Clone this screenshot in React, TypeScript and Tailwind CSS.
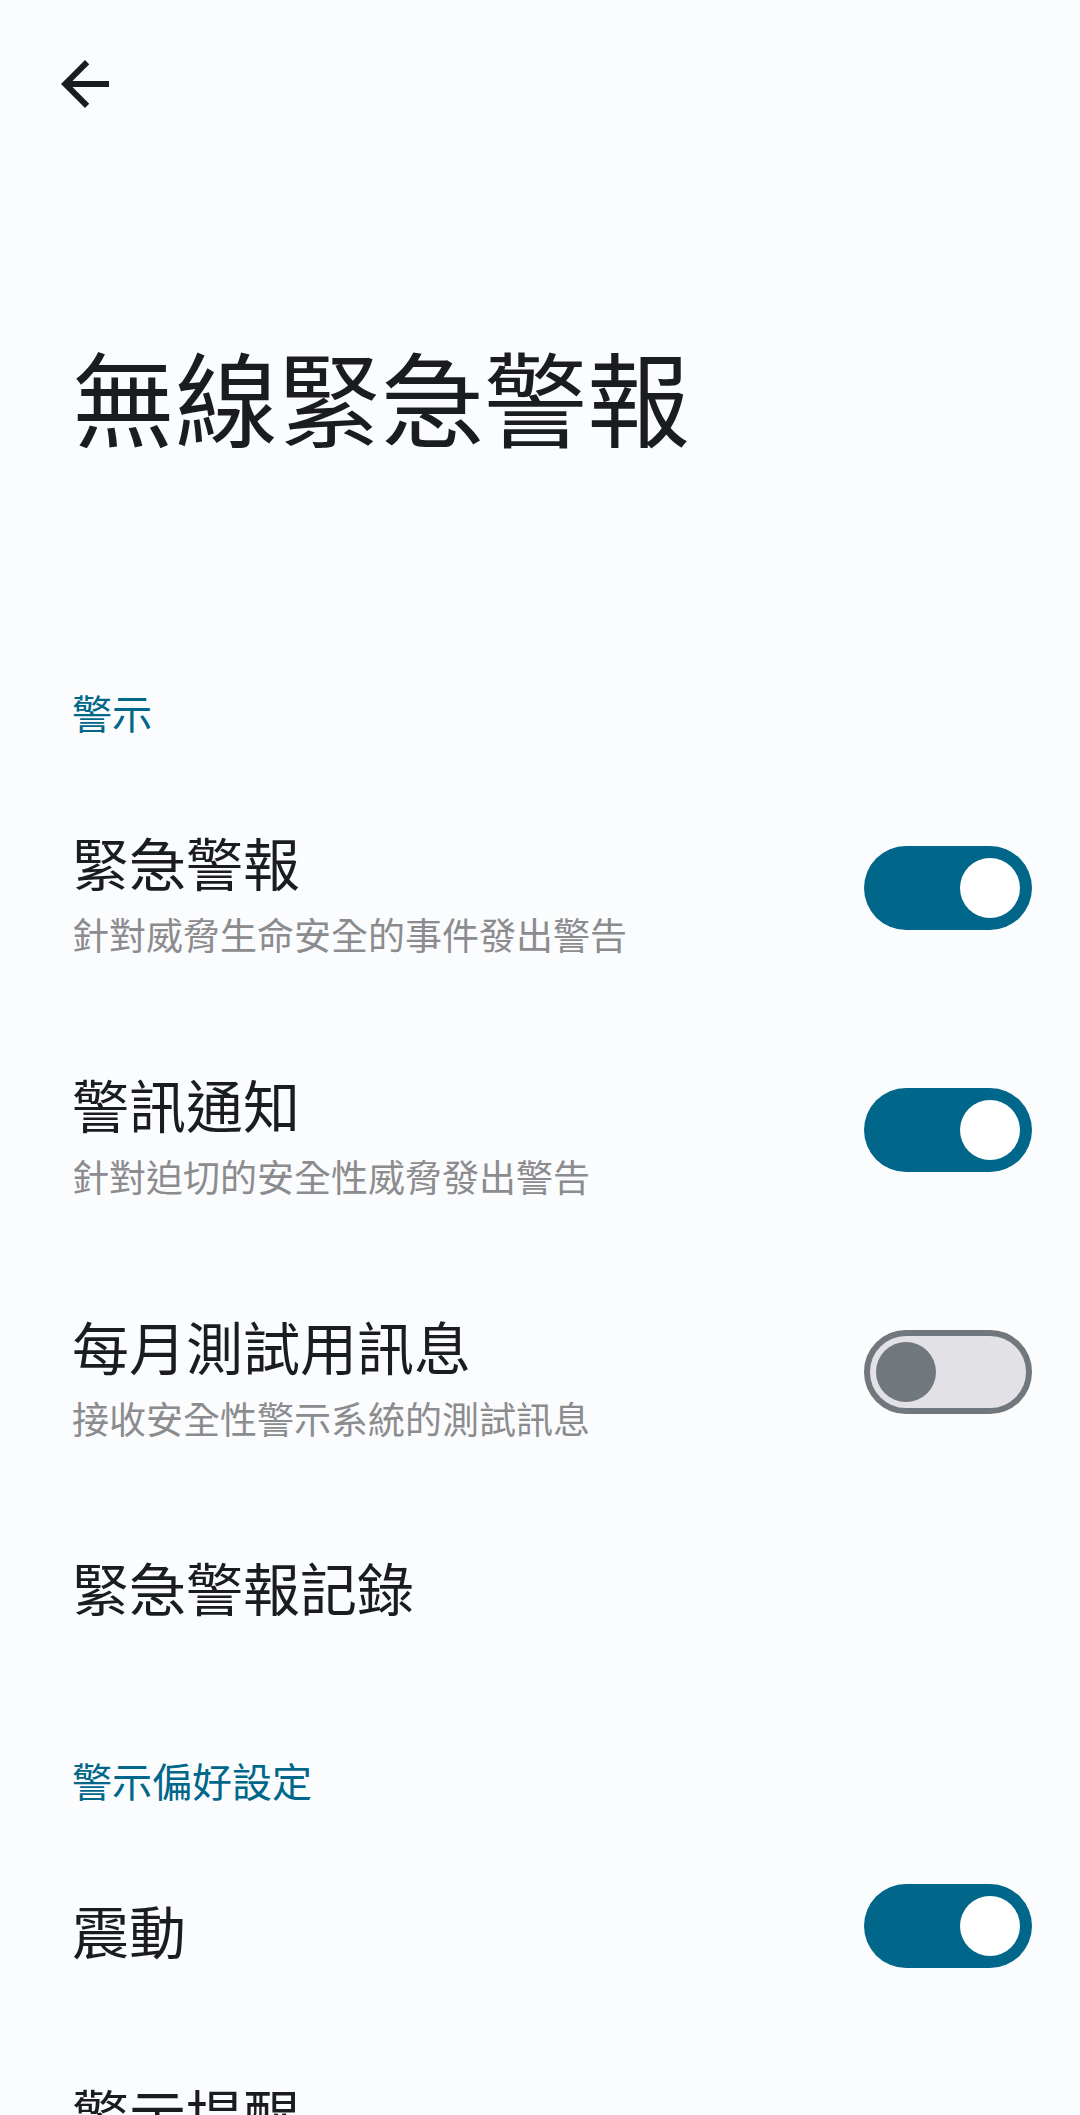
import React from "react";

const FONT = '"Noto Sans CJK TC", "Noto Sans", sans-serif';

function Toggle({ on }: { on: boolean }) {
  if (on) {
    return (
      <div className="flex h-[84px] w-[168px] shrink-0 items-center justify-end rounded-full bg-[#00668A] pr-[12px]">
        <div className="h-[60px] w-[60px] rounded-full bg-white" />
      </div>
    );
  }
  return (
    <div className="flex h-[84px] w-[168px] shrink-0 items-center justify-start rounded-full border-[6px] border-[#71787D] bg-[#E2E2E6] pl-[6px]">
      <div className="h-[60px] w-[60px] rounded-full bg-[#71787D]" />
    </div>
  );
}

function TwoLineRow({ title, sub, on }: { title: string; sub: string; on: boolean }) {
  return (
    <div className="flex h-[242px] justify-between pl-[72px] pr-[48px]">
      <div className="flex flex-col pt-[66px]">
        <div className="text-[57px] leading-[57px] text-[#1B1C1F]">{title}</div>
        <div className="mt-[26px] text-[37px] leading-[37px] text-[#8C8C8E]">{sub}</div>
      </div>
      <div className="self-center">
        <Toggle on={on} />
      </div>
    </div>
  );
}

export default function App() {
  return (
    <div className="min-h-[2115px] w-[1080px] overflow-hidden bg-[#FBFCFE]" style={{ fontFamily: FONT }}>
      <div className="flex h-[168px] items-center pl-[49px]">
        <svg width="72" height="72" viewBox="0 0 24 24" fill="#1B1C1F">
          <path d="M20 11H7.83l5.59-5.59L12 4l-8 8 8 8 1.41-1.41L7.83 13H20v-2z" />
        </svg>
      </div>

      <div className="mt-[176px] pl-[72px] text-[103px] leading-[103px] text-[#1B1C1F]">無線緊急警報</div>

      <div className="mt-[245px] pl-[72px] text-[40px] leading-[40px] text-[#00668A]">警示</div>

      <div className="mt-[35px]">
        <TwoLineRow title="緊急警報" sub="針對威脅生命安全的事件發出警告" on={true} />
        <TwoLineRow title="警訊通知" sub="針對迫切的安全性威脅發出警告" on={true} />
        <TwoLineRow title="每月測試用訊息" sub="接收安全性警示系統的測試訊息" on={false} />
      </div>

      <div className="flex h-[186px] items-center pl-[72px]">
        <div className="text-[57px] leading-[57px] text-[#1B1C1F]">緊急警報記錄</div>
      </div>

      <div className="mt-[81px] pl-[72px] text-[40px] leading-[40px] text-[#00668A]">警示偏好設定</div>

      <div className="mt-[35px] flex h-[182px] items-center justify-between pl-[72px] pr-[48px]">
        <div className="mt-[6px] text-[57px] leading-[57px] text-[#1B1C1F]">震動</div>
        <Toggle on={true} />
      </div>

      <div className="flex h-[192px] items-center pl-[72px]">
        <div className="text-[57px] leading-[57px] text-[#1B1C1F]">警示提醒</div>
      </div>
    </div>
  );
}
